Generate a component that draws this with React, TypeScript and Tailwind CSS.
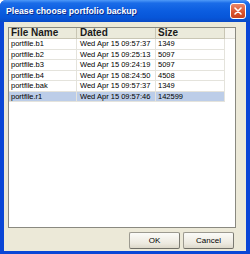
import React from 'react';

interface BackupRow {
  name: string;
  dated: string;
  size: string;
}

const rows: BackupRow[] = [
  { name: 'portfile.b1', dated: 'Wed Apr 15 09:57:37', size: '1349' },
  { name: 'portfile.b2', dated: 'Wed Apr 15 09:25:13', size: '5097' },
  { name: 'portfile.b3', dated: 'Wed Apr 15 09:24:19', size: '5097' },
  { name: 'portfile.b4', dated: 'Wed Apr 15 08:24:50', size: '4508' },
  { name: 'portfile.bak', dated: 'Wed Apr 15 09:57:37', size: '1349' },
  { name: 'portfile.r1', dated: 'Wed Apr 15 09:57:46', size: '142599' },
];

const selected = 5;

const font = { fontFamily: '"Liberation Sans", Arial, sans-serif' };

const CloseButton: React.FC = () => (
  <div className="w-[16px] h-[16px] rounded-[3px] border border-white bg-[linear-gradient(to_bottom,#e9876a,#d9532c_60%,#c8431f)] flex items-center justify-center">
    <svg width="8" height="8" viewBox="0 0 8 8">
      <path d="M1 1 L7 7 M7 1 L1 7" stroke="white" strokeWidth="1.6" strokeLinecap="round" />
    </svg>
  </div>
);

const DialogButton: React.FC<{ label: string }> = ({ label }) => (
  <button className="w-[51px] h-[17px] rounded-[2px] border border-[#9c9a90] border-r-[#7b7a72] border-b-[#6f6e67] bg-[linear-gradient(to_bottom,#fbfbf8,#ece9df_70%,#dcd8ca)] text-[8px] text-black flex items-center justify-center leading-none">
    {label}
  </button>
);

export default function App() {
  return (
    <div className="w-[250px] h-[254px] flex flex-col bg-[#0a46d6] rounded-t-[6px] overflow-hidden" style={font}>
      <div className="h-[22px] shrink-0 flex items-center justify-between pl-[6px] pr-[4px] bg-[linear-gradient(to_bottom,#4f9af8_0%,#1a6ce8_14%,#0b5de0_50%,#0756d9_80%,#0a4ac6_100%)]">
        <span className="text-white font-bold text-[8.7px] leading-none pt-[1px] [text-shadow:1px_1px_0_#0b2c8a]">
          Please choose portfolio backup
        </span>
        <CloseButton />
      </div>

      <div className="flex-1 mx-[4px] mb-[3px] bg-[#ece9d8] flex flex-col pt-[5px] pl-[4px] pr-[10px] pb-[2px]">
        <div className="h-[201px] bg-white border border-[#8a8980] flex flex-col">
          <div className="h-[11px] shrink-0 flex text-[10px] font-bold text-[#1a1a1a] leading-none">
            <div className="w-[68px] pl-[2px] flex items-end bg-[#ebeadb] border-b border-r border-[#c9c6b4]">File Name</div>
            <div className="w-[79px] pl-[3px] flex items-end bg-[#ebeadb] border-b border-r border-[#c9c6b4]">Dated</div>
            <div className="w-[69px] pl-[2px] flex items-end bg-[#ebeadb] border-b border-r border-[#c9c6b4]">Size</div>
            <div className="flex-1 bg-[#f6f5ef] border-b border-[#dcdad0]" />
          </div>
          {rows.map((r, i) => {
            const cell = `flex items-center border-b border-r border-[#e4e3dc] ${i === selected ? 'bg-[#bccde8]' : ''}`;
            return (
              <div key={r.name} className="h-[10.5px] flex text-[7.5px] text-black leading-none">
                <div className={`w-[68px] pl-[2px] ${cell}`}>{r.name}</div>
                <div className={`w-[79px] pl-[3px] ${cell}`}>{r.dated}</div>
                <div className={`w-[69px] pl-[2px] ${cell}`}>{r.size}</div>
                <div className="flex-1" />
              </div>
            );
          })}
        </div>

        <div className="flex justify-end gap-[3px] mt-[4px] pr-[2px]">
          <DialogButton label="OK" />
          <DialogButton label="Cancel" />
        </div>
      </div>
    </div>
  );
}
